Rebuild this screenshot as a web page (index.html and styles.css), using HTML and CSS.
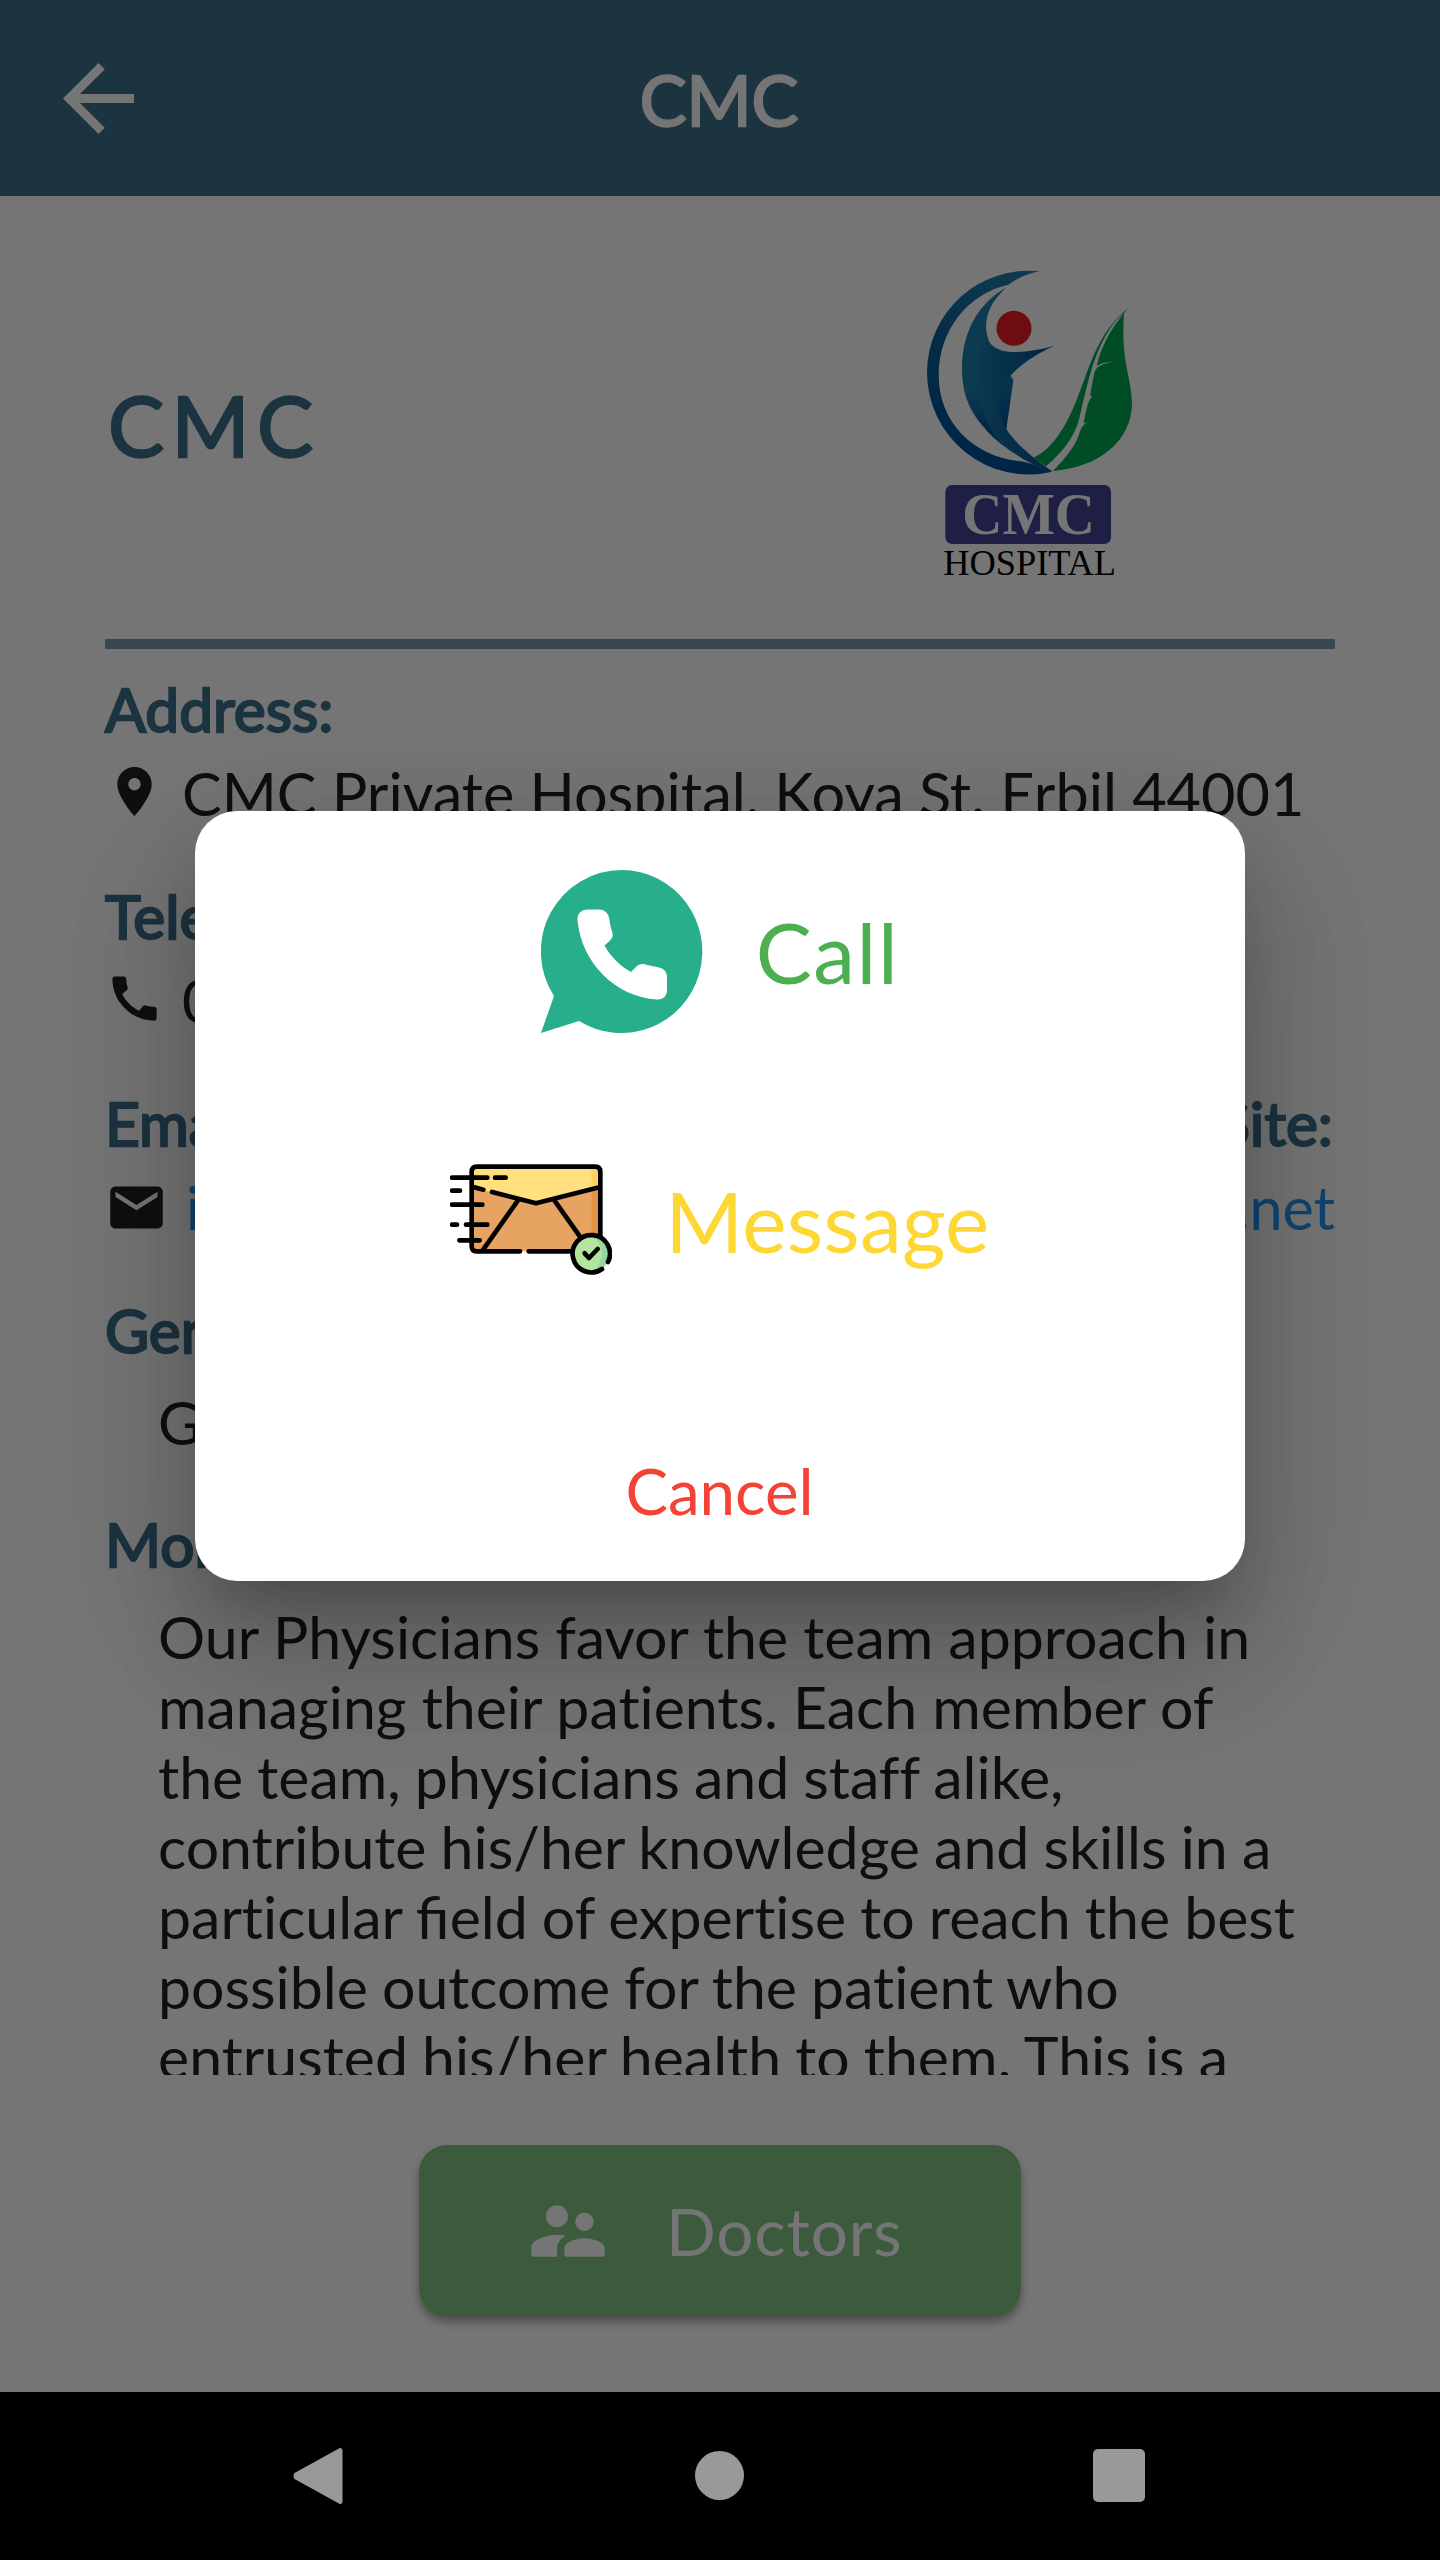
FILE: index.html
```html
<!DOCTYPE html>
<html lang="en">
<head>
<meta charset="utf-8">
<title>CMC</title>
<link rel="stylesheet" href="styles.css">
</head>
<body>
<div class="screen">
  <header class="appbar">
    <svg class="back" viewBox="4 4 16 16"><path d="M20 11H7.830l5.590-5.590L12 4l-8 8 8 8 1.410-1.410L7.830 13H20v-2z"/></svg>
    <h1 class="appbar-title heavy">CMC</h1>
  </header>

  <main class="content">
    <section class="hero">
      <h2 class="hero-name heavy">CMC</h2>
      <svg class="logo" viewBox="0 0 900 1080">
        <defs>
          <linearGradient id="ring" x1="0.6" y1="0" x2="0.4" y2="1">
            <stop offset="0" stop-color="#1f7fae"/><stop offset="0.45" stop-color="#0b5f96"/><stop offset="0.85" stop-color="#00539a"/><stop offset="1" stop-color="#005092"/>
          </linearGradient>
          <linearGradient id="wing" x1="0.5" y1="0" x2="0.7" y2="1">
            <stop offset="0" stop-color="#1b80ad"/><stop offset="0.55" stop-color="#1d7fae"/><stop offset="0.9" stop-color="#00529c"/>
          </linearGradient>
          <linearGradient id="figure" x1="0" y1="0" x2="1" y2="0">
            <stop offset="0" stop-color="#1c7bab"/><stop offset="0.5" stop-color="#0c659b"/><stop offset="1" stop-color="#005093"/>
          </linearGradient>
        </defs>
        <path fill="url(#ring)" d="M478 94A305 306 0 0 0 141 397A305 307 0 0 0 517 695C495 685 460 672 432 665C290 655 176 555 176 405C176 270 265 160 385 134C412 115 440 102 478 94Z"/>
        <path fill="url(#wing)" d="M380 142C285 195 246 290 246 385C246 470 275 520 310 560C330 585 350 602 372 618L400 420L330 310C303 250 325 190 380 142Z"/>
        <path fill="url(#figure)" d="M318 292C335 325 365 336 400 336C440 336 485 328 522 317C440 355 357 415 357 490C357 570 420 625 517 694C470 682 410 650 360 608C290 520 270 380 318 292Z"/>
        <circle cx="402" cy="265" r="52.500" fill="#ef1e27"/>
        <path fill="#00a651" d="M746 203C650 280 630 380 590 480C558 560 515 630 460 653L498 679C545 640 585 590 598 535C620 440 635 370 665 310C685 270 705 240 732 219C665 300 652 370 651 378C665 368 680 366 697 367C660 372 648 382 643 400C638 425 632 450 631 468L638 469C625 482 623 490 611 549L621 547C600 560 600 580 592 597C575 632 545 668 518 693C660 683 756 600 756 490C753 400 722 370 732 219Z"/>
        <rect x="196" y="735" width="497" height="177" rx="20" fill="#454499"/>
        <text class="logo-badge" x="247" y="881" textLength="398" lengthAdjust="spacingAndGlyphs">CMC</text>
        <text class="logo-caption" x="190" y="1005" textLength="518" lengthAdjust="spacingAndGlyphs">HOSPITAL</text>
      </svg>
    </section>

    <section class="details">
      <div class="field">
        <h3 class="label heavy">Address:</h3>
        <p class="value"><svg class="icon" viewBox="0 0 24 24"><path d="M12 2C8.130 2 5 5.130 5 9c0 5.250 7 13 7 13s7-7.750 7-13c0-3.870-3.130-7-7-7zm0 9.500c-1.380 0-2.500-1.120-2.500-2.500s1.120-2.500 2.500-2.500 2.500 1.120 2.500 2.500-1.120 2.500-2.500 2.500z"/></svg>CMC Private Hospital, Koya St. Erbil 44001</p>
      </div>
      <div class="field">
        <h3 class="label heavy">Telephone:</h3>
        <p class="value"><svg class="icon" viewBox="0 0 24 24"><path d="M20.010 15.380c-1.230 0-2.420-.2-3.530-.560-.350-.120-.740-.030-1.010.240l-1.570 1.970c-2.830-1.350-5.480-3.900-6.890-6.830l1.950-1.660c.270-.280.350-.670.240-1.020-.370-1.110-.560-2.300-.560-3.530 0-.540-.450-.990-.990-.990H4.190C3.650 3 3 3.240 3 3.990 3 13.280 10.730 21 20.010 21c.710 0 .990-.630.990-1.180v-3.450c0-.540-.450-.990-.990-.990z"/></svg>066 221 9999</p>
      </div>
      <div class="pair">
        <div class="field">
          <h3 class="label heavy">Email:</h3>
          <p class="value link"><svg class="icon mail" viewBox="0 0 24 24"><path d="M20 4H4c-1.100 0-1.990.9-1.990 2L2 18c0 1.100.9 2 2 2h16c1.100 0 2-.9 2-2V6c0-1.100-.9-2-2-2zm0 4l-8 5-8-5V6l8 5 8-5v2z"/></svg>info@cmc</p>
        </div>
        <div class="field end">
          <h3 class="label heavy">Web Site:</h3>
          <p class="value link">cmc.net</p>
        </div>
      </div>
      <div class="field about">
        <h3 class="label heavy">General:</h3>
        <p class="value indent">General</p>
      </div>
      <div class="field more">
        <h3 class="label heavy">More:</h3>
        <p class="description">Our Physicians favor the team approach in<br>managing their patients. Each member of<br><span class="tight">the team, physicians and staff alike,<br>contribute his/her knowledge and skills in a<br>particular <span class="ligature">fi</span>eld of expertise to reach the best<br>possible outcome for the patient who<br>entrusted his/her health to them. This is a</span></p>
      </div>
    </section>

    <button class="doctors" type="button">
      <svg viewBox="0 0 24 24"><path d="M16.500 12c1.380 0 2.490-1.120 2.490-2.500S17.880 7 16.500 7C15.120 7 14 8.120 14 9.500s1.120 2.500 2.500 2.500zM9 11c1.660 0 2.990-1.340 2.990-3S10.660 5 9 5C7.340 5 6 6.340 6 8s1.340 3 3 3zm7.500 3c-1.830 0-5.500.920-5.500 2.750V18.300Q11 19 11.700 19H21.300Q22 19 22 18.300v-1.550c0-1.830-3.670-2.750-5.500-2.750zM9 13c-2.330 0-7 1.170-7 3.500V18.300Q2 19 2.700 19H9v-2.250c0-.850.330-2.340 2.370-3.470C10.500 13.100 9.660 13 9 13z"/></svg>
      <span>Doctors</span>
    </button>
  </main>

  <div class="scrim">
    <div class="dialog" role="dialog">
      <div class="choice call">
        <svg class="choice-icon" viewBox="0 0 162 163">
          <path fill="#27ae8a" d="M81 0A81 81.500 0 1 1 38 151L0 163L13 126A81 81.500 0 0 1 81 0Z"/>
          <path fill="#fff" d="M47 39.500H58C64 39.500 68 44 68.500 50C69 55 70 58 71.300 62C72.500 67 70.500 69 68 71.500L63.500 75.500C70 87 79 96 90 102L95 97C98 94 101 93.500 104 94.500L118 97.500C123 98.500 126 102 126 107V120C126 126 122 130 116 129.500C74 127 40 92 36.500 50C36 44 40 39.500 47 39.500Z"/>
        </svg>
        <span>Call</span>
      </div>
      <div class="choice message">
        <svg class="choice-icon" viewBox="60 -3 486 489" preserveAspectRatio="none">
          <path fill="#e6a361" d="M125 90H486V334H125Z"/>
          <path fill="#e19443" d="M485 90H511V300H485Z"/>
          <path fill="#ffdf7e" d="M125 80H500L511 142L318 190L125 142Z"/>
          <path fill="#ffd064" d="M485 82H511V142L485 149Z"/>
          <g class="ink">
            <path d="M423 334H296M270 334H140Q125 334 125 318V96Q125 80 140 80H496Q511 80 511 96V290"/>
            <path d="M130 141L160 149M186 156L318 190L508 142M266 178L158 331M371 178L450 290"/>
            <path d="M66 113H172M195 113H227M66 152H90M66 194H157M66 254H81M108 254H172M88 301H149"/>
          </g>
          <circle cx="483" cy="341" r="56" fill="#95d6a4"/>
          <path fill="#b3e59f" d="M478 285A56 56 0 0 0 478 397C528 376 528 306 478 285Z"/>
          <g class="ink">
            <path d="M534 366A56 56 0 1 0 516 387"/>
            <path d="M464 340L477 354L503 327"/>
          </g>
        </svg>
        <span>Message</span>
      </div>
      <div class="cancel">Cancel</div>
    </div>
  </div>

  <nav class="navbar">
    <svg viewBox="0 0 52 58"><path d="M45 2Q49 -1 49.500 4V54Q49 59 45 56L1.500 32Q-.5 29 1.500 26Z"/></svg>
    <svg viewBox="0 0 52 58"><circle cx="26.500" cy="28.500" r="24.500"/></svg>
    <svg viewBox="0 0 52 58"><rect x="0" y="2" width="52" height="53" rx="5"/></svg>
  </nav>
</div>
</body>
</html>
```
FILE: styles.css
```css
* { box-sizing: border-box; margin: 0; padding: 0; }

body {
  width: 1440px;
  height: 2560px;
  overflow: hidden;
  font-family: Lato, sans-serif;
  font-weight: 400;
}

h1, h2, h3 { font-weight: 400; }
svg { display: block; flex: none; }

.screen {
  position: relative;
  display: flex;
  flex-direction: column;
  width: 1440px;
  height: 2560px;
  background: #fff;
}

.heavy { -webkit-text-stroke: 2.300px currentColor; }

.appbar {
  display: grid;
  grid-template-columns: 133px 1fr 133px;
  align-items: center;
  height: 196px;
  background: #3d6f8d;
  color: #fff;
}
.back { width: 71px; height: 71px; margin-left: 63px; fill: #fff; }
.appbar-title { padding: 2px 2px 0 0; text-align: center; font-size: 70px; line-height: 84px; }

.content {
  display: flex;
  flex-direction: column;
  align-items: stretch;
  height: 2196px;
  padding: 0 105px;
}

.hero {
  display: flex;
  align-items: center;
  justify-content: space-between;
  height: 453px;
  padding-right: 155px;
  border-bottom: 10px solid #7a9aac;
}
.hero-name {
  padding: 14px 0 0 3px;
  color: #3d6f8d;
  font-size: 84px;
  letter-spacing: 7.500px;
  line-height: 100px;
}
.logo { width: 300px; height: 360px; margin-top: 4px; }
.logo-badge { font: 700 175px "Liberation Serif", serif; fill: #fff; }
.logo-caption { font: 400 110px "Liberation Serif", serif; fill: #000; }

.details { display: flex; flex-direction: column; gap: 51px; padding-top: 24px; }
.field { display: flex; flex-direction: column; gap: 12px; }
.label { color: #3d6f8d; font-size: 60.500px; line-height: 72px; }
.value {
  display: flex;
  align-items: center;
  color: #212121;
  font-size: 59.400px;
  line-height: 72px;
  white-space: nowrap;
}
.icon { width: 59px; height: 59px; margin: -3px 18px 0 0; fill: #212121; }
.mail { width: 63px; height: 63px; margin-top: 0; }
.link { color: #2196f3; }
.pair { display: flex; justify-content: space-between; }
.end { align-items: flex-end; }
.end .label { margin-right: 2px; }
.indent { padding-left: 53px; }
.about { gap: 20px; margin-bottom: -1px; }
.more { gap: 22px; }
.description {
  height: 473px;
  padding-left: 53px;
  overflow: hidden;
  color: #212121;
  font-size: 59px;
  font-variant-ligatures: no-common-ligatures;
  line-height: 70px;
  white-space: nowrap;
}
.ligature { font-variant-ligatures: common-ligatures; }
.tight { word-spacing: -1px; }

.doctors {
  display: flex;
  align-items: center;
  align-self: center;
  gap: 54px;
  width: 602px;
  height: 171px;
  margin-top: 70px;
  padding-left: 105px;
  border: 0;
  border-radius: 28px;
  background: #81c784;
  box-shadow: 0 6px 10px rgba(0, 0, 0, .35);
  color: #fff;
  font: 400 65.500px Lato, sans-serif;
  letter-spacing: .900px;
}
.doctors svg { width: 88px; height: 88px; fill: #fff; }

.scrim {
  position: absolute;
  inset: 0 0 168px;
  background: rgba(0, 0, 0, .54);
}
.dialog {
  position: absolute;
  top: 811px;
  left: 195px;
  display: flex;
  flex-direction: column;
  align-items: center;
  width: 1050px;
  height: 770px;
  border-radius: 42px;
  background: #fff;
  box-shadow: 0 38px 53px -24px rgba(0, 0, 0, .2), 0 84px 133px 10px rgba(0, 0, 0, .14), 0 32px 120px 14px rgba(0, 0, 0, .12);
}
.choice { display: flex; align-items: center; gap: 53px; font-size: 84px; line-height: 102px; }
.choice-icon { width: 162px; height: 163px; }
.call { margin-top: 59px; color: #4caf50; letter-spacing: 1.500px; }
.message { margin-top: 106px; color: #fdd835; letter-spacing: .200px; }
.cancel { margin-top: 149px; padding-right: 1px; color: #f44336; font-size: 63.700px; line-height: 80px; }
.ink { fill: none; stroke: #000; stroke-width: 14; stroke-linecap: round; stroke-linejoin: round; }

.navbar {
  display: grid;
  grid-template-columns: repeat(3, 52px);
  justify-content: center;
  align-items: center;
  column-gap: 348px;
  height: 168px;
  padding-right: 3px;
  background: #000;
}
.navbar svg { width: 52px; height: 58px; fill: #999; }
```
